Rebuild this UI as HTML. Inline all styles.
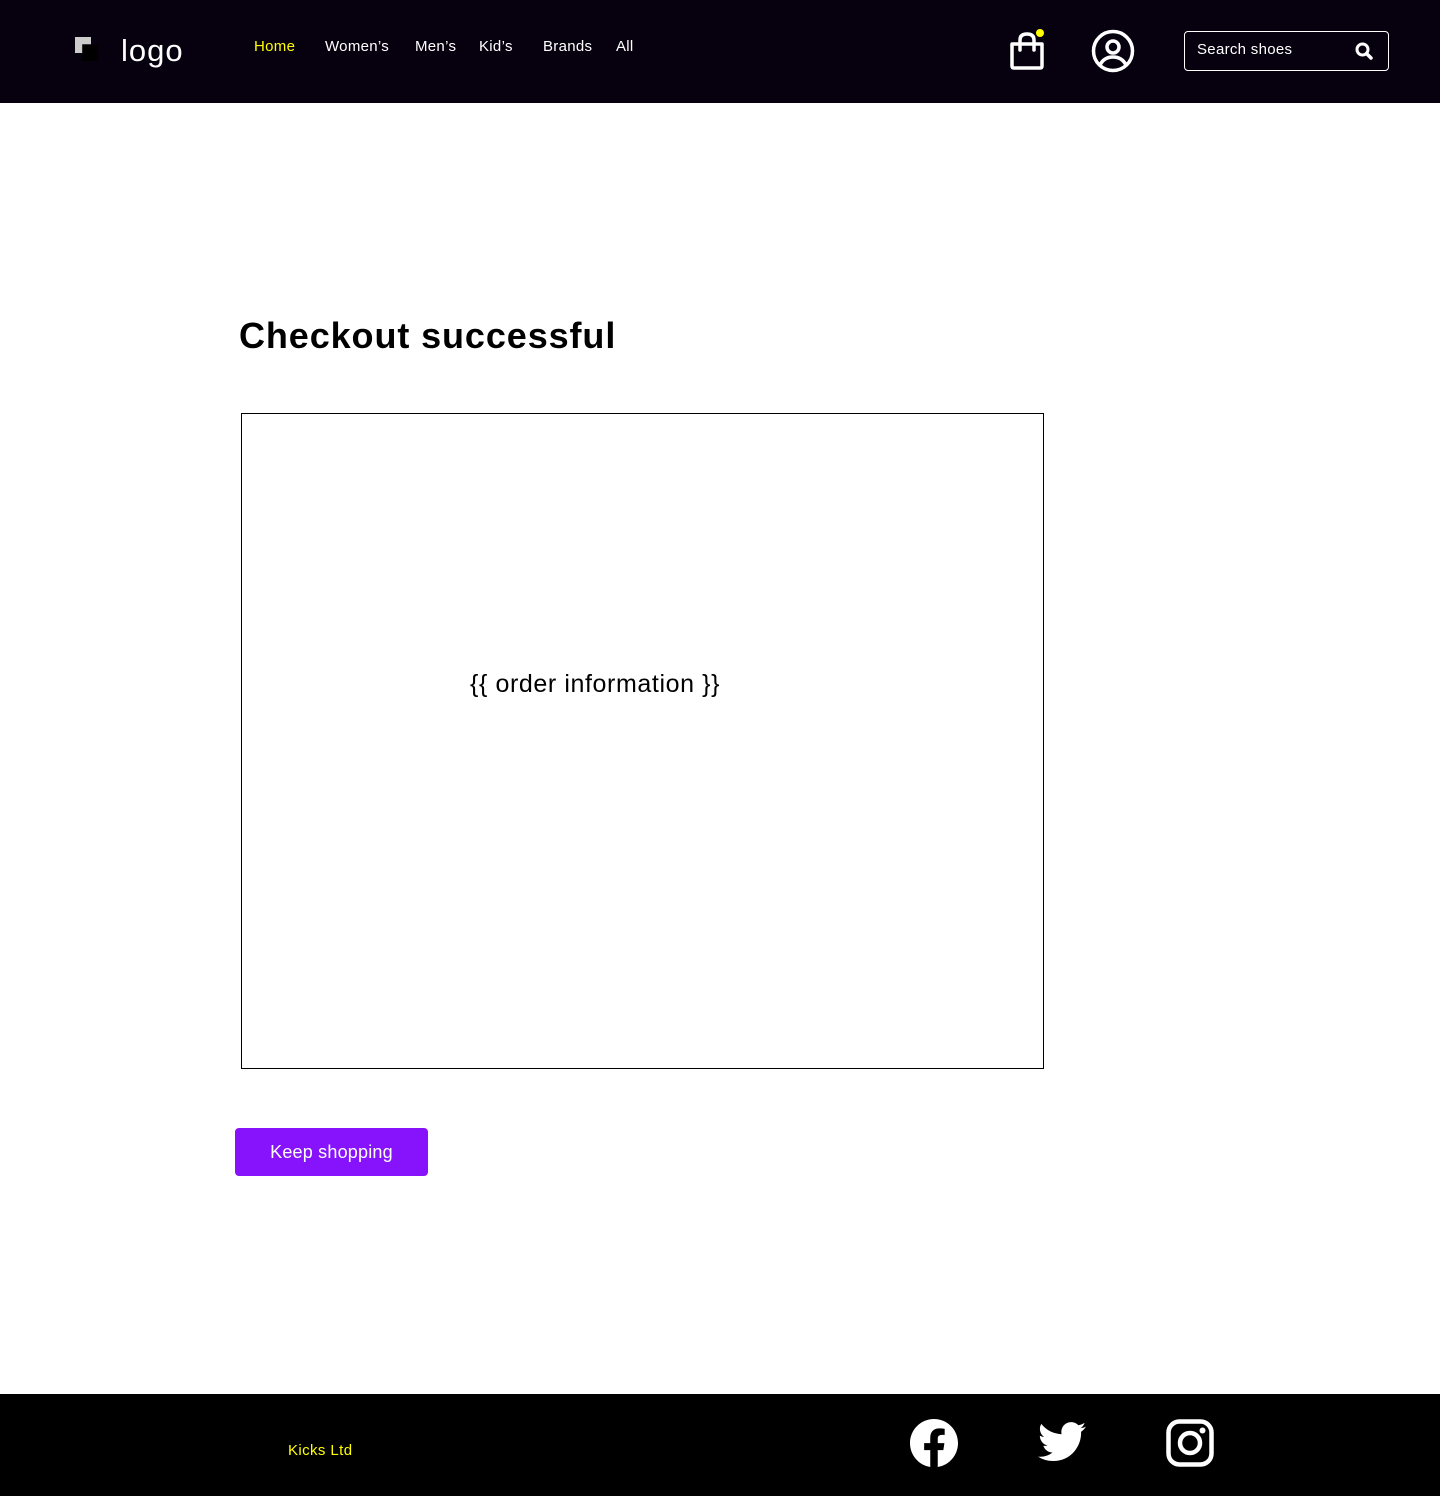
<!DOCTYPE html>
<html><head><meta charset="utf-8"><style>
*{margin:0;padding:0;box-sizing:border-box}
body{width:1440px;height:1496px;background:#fff;font-family:"Liberation Sans",sans-serif;position:relative;overflow:hidden}
header{position:absolute;left:0;top:0;width:1440px;height:103px;background:#07010f}
.a{position:absolute;white-space:nowrap}
.nav{color:#fff;font-size:15px;top:38px;letter-spacing:0.3px}
footer{position:absolute;left:0;top:1394px;width:1440px;height:102px;background:#000}
</style></head><body>
<header>
<div class="a" style="left:82px;top:45px;width:16px;height:16px;background:#000"></div>
<div class="a" style="left:75px;top:37px;width:16px;height:16px;background:#ccc;clip-path:polygon(0 0,100% 0,100% 45%,45% 45%,45% 100%,0 100%)"></div>
<div class="a" style="left:121px;top:33px;color:#fff;font-size:31px;letter-spacing:1px">logo</div>
<div class="a nav" style="left:254px;color:#ffff00">Home</div>
<div class="a nav" style="left:325px">Women’s</div>
<div class="a nav" style="left:415px">Men’s</div>
<div class="a nav" style="left:479px">Kid’s</div>
<div class="a nav" style="left:543px">Brands</div>
<div class="a nav" style="left:616px">All</div>
<svg class="a" style="left:1008px;top:28px" width="40" height="44" viewBox="0 0 40 44">
<path d="M4 16 H34 V38 Q34 40 32 40 H6 Q4 40 4 38 Z" fill="none" stroke="#fff" stroke-width="3.5" stroke-linejoin="round"/>
<path d="M12 22 V12 Q12 6 19 6 Q26 6 26 12 V22" fill="none" stroke="#fff" stroke-width="3.5" stroke-linecap="round"/>
<circle cx="32" cy="5" r="4" fill="#ffff00"/></svg>
<svg class="a" style="left:1091px;top:29px" width="44" height="44" viewBox="0 0 44 44">
<circle cx="22" cy="22" r="19.5" fill="none" stroke="#fff" stroke-width="3.5"/>
<circle cx="22" cy="18" r="6" fill="none" stroke="#fff" stroke-width="3.5"/>
<path d="M9 36 Q13 28 22 28 Q31 28 35 36" fill="none" stroke="#fff" stroke-width="3.5"/></svg>
<div class="a" style="left:1184px;top:31px;width:205px;height:40px;border:1px solid #fff;border-radius:4px"></div>
<div class="a" style="left:1197px;top:41px;color:#fff;font-size:15px;letter-spacing:0.3px">Search shoes</div>
<svg class="a" style="left:1354px;top:41px" width="20" height="20" viewBox="0 0 20 20">
<circle cx="8.5" cy="8.5" r="5.5" fill="none" stroke="#fff" stroke-width="3"/>
<path d="M12.5 12.5 L17 17" stroke="#fff" stroke-width="3.5" stroke-linecap="round"/></svg>
</header>
<div class="a" style="left:239px;top:315px;font-size:36px;font-weight:bold;color:#000;letter-spacing:0.9px">Checkout successful</div>
<div class="a" style="left:241px;top:413px;width:803px;height:656px;border:1px solid #000"></div>
<div class="a" style="left:470px;top:670px;font-size:25px;color:#000;letter-spacing:0.6px">{{ order information }}</div>
<div class="a" style="left:235px;top:1128px;width:193px;height:48px;background:#8613fb;border-radius:4px;color:#fff;font-size:18px;text-align:center;line-height:49px;letter-spacing:0.2px">Keep shopping</div>
<footer>
<div class="a" style="left:288px;top:48px;color:#ffff00;font-size:15px;letter-spacing:0.4px">Kicks Ltd</div>
<svg class="a" style="left:910px;top:25px" width="48" height="48" viewBox="0 0 24 24"><path fill="#fff" d="M24 12.07C24 5.41 18.63 0 12 0S0 5.4 0 12.07C0 18.1 4.39 23.1 10.13 24v-8.44H7.080v-3.49h3.04V9.41c0-3.020 1.8-4.7 4.54-4.7 1.31 0 2.68.24 2.68.24v2.97h-1.5c-1.5 0-1.96.93-1.96 1.89v2.26h3.32l-.53 3.5h-2.8V24C19.62 23.1 24 18.1 24 12.07"/></svg>
<svg class="a" style="left:1038px;top:27px" width="48" height="42" viewBox="0 0 24 20"><path fill="#fff" d="M23.95 2.37c-.88.39-1.83.65-2.82.77a4.92 4.92 0 0 0 2.16-2.72c-.95.56-2 .97-3.12 1.2a4.92 4.92 0 0 0-8.38 4.48A13.94 13.94 0 0 1 1.64.95a4.92 4.92 0 0 0 1.52 6.57 4.9 4.9 0 0 1-2.23-.62v.06a4.92 4.92 0 0 0 3.95 4.82 4.94 4.94 0 0 1-2.22.08 4.93 4.93 0 0 0 4.6 3.42A9.87 9.87 0 0 1 0 17.32a13.9 13.9 0 0 0 7.55 2.21c9.05 0 14-7.5 14-13.98 0-.21 0-.42-.02-.63A9.94 9.94 0 0 0 24 2.37z"/></svg>
<svg class="a" style="left:1166px;top:25px" width="48" height="48" viewBox="0 0 48 48">
<rect x="2.5" y="2.5" width="43" height="43" rx="11" fill="none" stroke="#fff" stroke-width="4.5"/>
<circle cx="24" cy="24" r="10" fill="none" stroke="#fff" stroke-width="4.5"/>
<circle cx="36.5" cy="11.5" r="3" fill="#fff"/></svg>
</footer>
</body></html>
